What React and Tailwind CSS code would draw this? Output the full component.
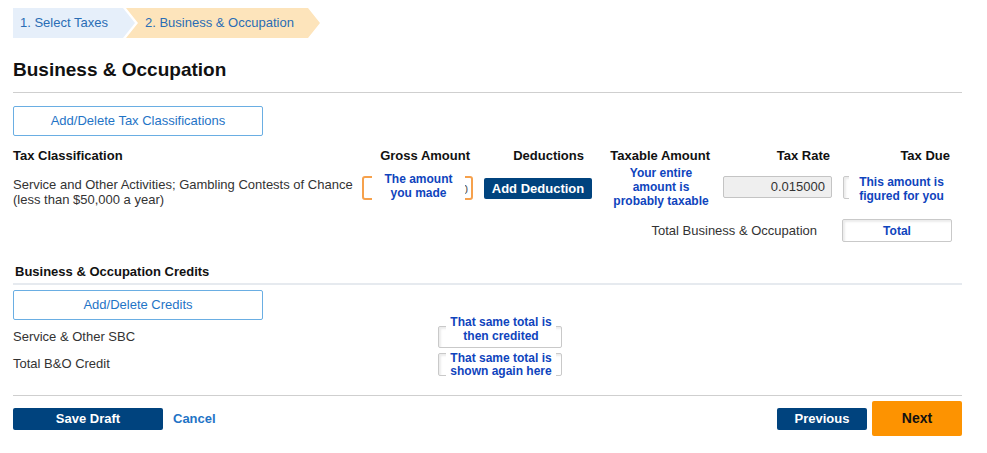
import React from 'react';

const font = { fontFamily: '"Liberation Sans", Arial, sans-serif' };

function Steps() {
    return (
        <div className="flex h-[30px] mt-2 ml-[13px]">
            <div className="flex items-center w-[122px] pl-[7px] bg-[#e6effa] text-[13px] text-[#2a6db5] [clip-path:polygon(0_0,calc(100%_-_12px)_0,100%_50%,calc(100%_-_12px)_100%,0_100%)]">
                1. Select Taxes
            </div>
            <div className="flex items-center w-[194px] -ml-[9px] pl-[19px] bg-[#fde4bb] text-[13px] text-[#2a6db5] [clip-path:polygon(0_0,calc(100%_-_12px)_0,100%_50%,calc(100%_-_12px)_100%,0_100%,12px_50%)]">
                2. Business &amp; Occupation
            </div>
        </div>
    );
}

function OutlineButton({ children }) {
    return (
        <button className="w-[250px] h-[30px] border border-[#6aaee3] rounded-[2px] bg-white text-[13px] text-[#1f74c6]">
            {children}
        </button>
    );
}

function Note({ children, className = '' }) {
    return (
        <div className={`absolute bg-white text-center text-[12px] leading-[13.5px] font-bold text-[#0f44bd] ${className}`}>
            {children}
        </div>
    );
}

function GrayBox({ className = '', children }) {
    return (
        <div className={`relative border border-[#c9c9c9] rounded-[2px] bg-white shadow-[inset_2px_2px_2px_rgba(0,0,0,0.08)] ${className}`}>
            {children}
        </div>
    );
}

export default function App() {
    return (
        <div className="w-[987px] h-[453px] bg-white text-[#222] overflow-hidden" style={font}>
            <Steps />

            <div className="pl-[13px] pr-[25px]">
                <h1 className="mt-[21px] text-[19px] leading-[22px] font-bold text-[#111]">Business &amp; Occupation</h1>
                <div className="mt-[11px] border-t border-[#cfcfcf]" />

                <div className="mt-[13px]">
                    <OutlineButton>Add/Delete Tax Classifications</OutlineButton>
                </div>

                {/* header row */}
                <div className="grid grid-cols-[345px_120px_122px_120px_118px_124px] mt-[12px] text-[13px] leading-[15px] font-bold text-[#111]">
                    <div>Tax Classification</div>
                    <div className="text-right pr-2">Gross Amount</div>
                    <div className="text-right pr-4">Deductions</div>
                    <div className="text-right pr-[10px]">Taxable Amount</div>
                    <div className="text-right pr-2">Tax Rate</div>
                    <div className="text-right pr-3">Tax Due</div>
                </div>

                {/* data row */}
                <div className="grid grid-cols-[345px_120px_122px_120px_118px_124px] items-start h-[44px] mt-[3px]">
                    <div className="pt-[11px] text-[13px] leading-[15px] text-[#333]">
                        Service and Other Activities; Gambling Contests of Chance
                        <br />
                        (less than $50,000 a year)
                    </div>
                    <div className="pl-1 pt-[10px]">
                        <div className="relative w-[111px] h-[24px] border-2 border-[#f6a14c] rounded-[3px] bg-white">
                            <span className="absolute right-[3px] top-[3px] text-[12px] text-[#555]">0</span>
                            <Note className="left-[8px] w-[93px] -top-[5px] pb-[1px]">
                                The amount
                                <br />
                                you made
                            </Note>
                        </div>
                    </div>
                    <div className="pl-[6px] pt-[10px]">
                        <button className="w-[108px] h-[21px] rounded-[2px] bg-[#00437e] text-white text-[13px] font-bold">
                            Add Deduction
                        </button>
                    </div>
                    <div className="text-center text-[12px] leading-[14px] font-bold text-[#0f44bd] pl-[2px]">
                        Your entire
                        <br />
                        amount is
                        <br />
                        probably taxable
                    </div>
                    <div className="pl-[3px] pt-[10px]">
                        <div className="w-[109px] h-[22px] border border-[#c4c4c4] rounded-[2px] bg-[#efefef] text-right pr-[6px] text-[13px] leading-[20px] text-[#333]">
                            0.015000
                        </div>
                    </div>
                    <div className="pl-[5px] pt-[10px]">
                        <GrayBox className="w-[110px] h-[23px]">
                            <Note className="left-[5px] -right-[2px] -top-[1px] pb-[1px]">
                                This amount is
                                <br />
                                figured for you
                            </Note>
                        </GrayBox>
                    </div>
                </div>

                {/* total row */}
                <div className="flex justify-end items-center mt-[9px] pr-[10px]">
                    <span className="text-[13px] text-[#333] mr-[25px]">Total Business &amp; Occupation</span>
                    <GrayBox className="w-[110px] h-[23px] flex items-center justify-center">
                        <span className="text-[12px] font-bold text-[#0f44bd]">Total</span>
                    </GrayBox>
                </div>

                {/* credits */}
                <div className="mt-[22px] pl-[2px] pb-[3px] border-b-2 border-[#e6eaef] text-[13px] leading-[16px] font-bold text-[#111]">
                    Business &amp; Occupation Credits
                </div>
                <div className="mt-[5px]">
                    <OutlineButton>Add/Delete Credits</OutlineButton>
                </div>

                <div className="flex items-center mt-[6px] h-[22px]">
                    <span className="w-[425px] text-[13px] text-[#333]">Service &amp; Other SBC</span>
                    <GrayBox className="w-[124px] h-[22px]">
                        <Note className="left-[7px] w-[110px] -top-[11px] pb-[1px]">
                            That same total is
                            <br />
                            then credited
                        </Note>
                    </GrayBox>
                </div>
                <div className="flex items-center mt-[4px] h-[24px]">
                    <span className="w-[425px] text-[13px] text-[#333]">Total B&amp;O Credit</span>
                    <GrayBox className="w-[124px] h-[23px]">
                        <Note className="left-[7px] w-[110px] -top-[2px]">
                            That same total is
                            <br />
                            shown again here
                        </Note>
                    </GrayBox>
                </div>

                <div className="mt-[19px] border-t border-[#cfcfcf]" />

                <div className="flex items-center justify-between mt-[5px]">
                    <div className="flex items-center">
                        <button className="w-[150px] h-[22px] rounded-[2px] bg-[#00437e] text-white text-[13px] font-bold">
                            Save Draft
                        </button>
                        <a className="ml-[10px] text-[13px] font-bold text-[#1f74c6] cursor-pointer">Cancel</a>
                    </div>
                    <div className="flex items-center">
                        <button className="w-[90px] h-[22px] rounded-[2px] bg-[#00437e] text-white text-[13px] font-bold">
                            Previous
                        </button>
                        <button className="ml-[5px] w-[90px] h-[35px] rounded-[2px] bg-[#fd9301] text-[#111] text-[14px] font-bold">
                            Next
                        </button>
                    </div>
                </div>
            </div>
        </div>
    );
}
